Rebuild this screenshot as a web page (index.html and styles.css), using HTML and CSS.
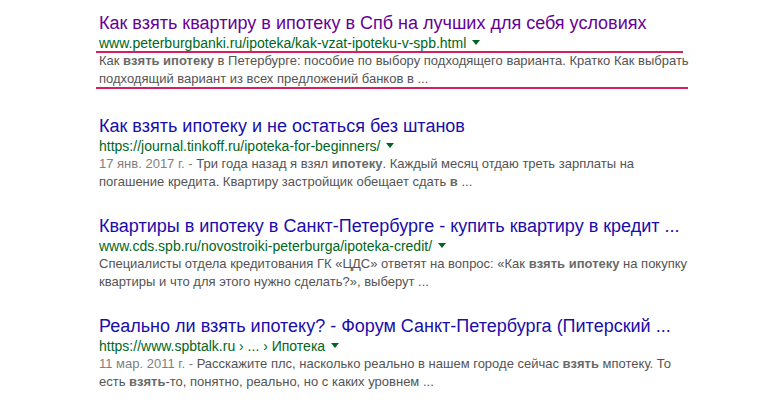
FILE: index.html
```html
<!DOCTYPE html>
<html lang="ru">
<head>
<meta charset="utf-8">
<link rel="stylesheet" href="styles.css">
</head>
<body>
<div class="results">
  <div class="result marked">
    <a class="title visited" href="#">Как взять квартиру в ипотеку в Спб на лучших для себя условиях</a>
    <div class="url">www.peterburgbanki.ru/ipoteka/kak-vzat-ipoteku-v-spb.html<span class="arrow"></span></div>
    <div class="mark mark-top"></div>
    <div class="snippet">Как <b>взять ипотеку</b> в Петербурге: пособие по выбору подходящего варианта. Кратко Как выбрать подходящий вариант из всех предложений банков в ...</div>
    <div class="mark mark-bottom"></div>
  </div>
  <div class="result">
    <a class="title" href="#">Как взять ипотеку и не остаться без штанов</a>
    <div class="url">https://journal.tinkoff.ru/ipoteka-for-beginners/<span class="arrow"></span></div>
    <div class="snippet"><span class="date">17 янв. 2017 г. - </span>Три года назад я взял <b>ипотеку</b>. Каждый месяц отдаю треть зарплаты на погашение кредита. Квартиру застройщик обещает сдать <b>в</b> ...</div>
  </div>
  <div class="result">
    <a class="title" href="#">Квартиры в ипотеку в Санкт-Петербурге - купить квартиру в кредит ...</a>
    <div class="url">www.cds.spb.ru/novostroiki-peterburga/ipoteka-credit/<span class="arrow"></span></div>
    <div class="snippet">Специалисты отдела кредитования ГК «ЦДС» ответят на вопрос: «Как <b>взять ипотеку</b> на покупку квартиры и что для этого нужно сделать?», выберут ...</div>
  </div>
  <div class="result">
    <a class="title" href="#">Реально ли взять ипотеку? - Форум Санкт-Петербурга (Питерский ...</a>
    <div class="url">https://www.spbtalk.ru › ... › Ипотека<span class="arrow"></span></div>
    <div class="snippet"><span class="date">11 мар. 2011 г. - </span>Расскажите плс, насколько реально в нашем городе сейчас <b>взять</b> мпотеку. То есть <b>взять</b>-то, понятно, реально, но с каких уровнем ...</div>
  </div>
</div>
</body>
</html>
```

FILE: styles.css
```css
html, body {
  margin: 0;
  padding: 0;
  background: #ffffff;
}

body {
  font-family: "Liberation Sans", Arial, sans-serif;
}

.results {
  display: flex;
  flex-direction: column;
  gap: 24px;
  padding: 12px 0 0 99px;
}

.result {
  position: relative;
  width: 600px;
}

.title {
  display: block;
  font-size: 18px;
  line-height: 22px;
  color: #1a0dab;
  text-decoration: none;
  white-space: nowrap;
}

.title.visited {
  color: #660099;
}

.url {
  font-size: 14px;
  line-height: 18px;
  color: #006621;
  white-space: nowrap;
}

.arrow {
  display: inline-block;
  margin-left: 6px;
  vertical-align: middle;
  margin-top: -3px;
  border-top: 5px solid #006621;
  border-left: 4px solid transparent;
  border-right: 4px solid transparent;
}

.snippet {
  font-size: 13px;
  line-height: 18px;
  color: #545454;
}

.snippet b {
  color: #6a6a6a;
}

.date {
  color: #808080;
}

.marked {
  padding-bottom: 3px;
}

.mark {
  position: absolute;
  left: -3px;
  height: 2px;
  background: #d81e5b;
}

.mark-top {
  top: 39px;
  width: 587px;
}

.mark-bottom {
  top: 75px;
  width: 592px;
}
```
